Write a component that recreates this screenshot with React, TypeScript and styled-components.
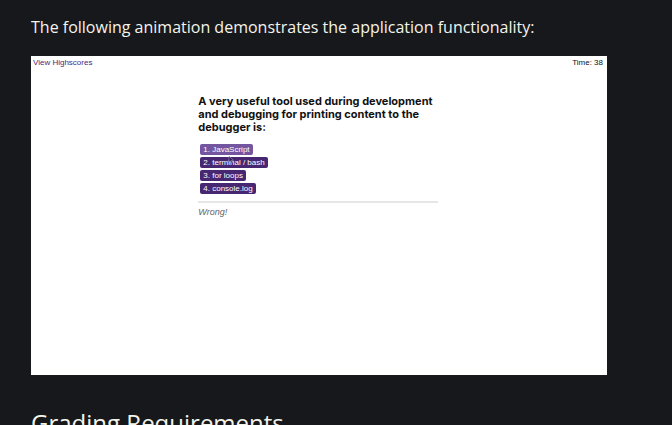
import React from "react";
import styled, { createGlobalStyle } from "styled-components";

const GlobalStyle = createGlobalStyle`
  body {
    margin: 0;
    background: #17181c;
    overflow: hidden;
  }
`;

const Page = styled.main`
  padding: 15px 65px 0 31px;
  color: #f3f4ea;
  font-family: "Open Sans", "Noto Sans", sans-serif;
`;

const Intro = styled.p`
  margin: 0 0 17px;
  font-size: 16px;
  line-height: 24px;
  white-space: nowrap;
`;

const Demo = styled.section`
  box-sizing: border-box;
  min-height: 319px;
  padding: 2px 4px 2px 2px;
  background: #fff;
  color: #111;
  font-family: "Liberation Sans", Arial, sans-serif;
`;

const TopBar = styled.header`
  display: flex;
  justify-content: space-between;
  font-size: 8px;
  line-height: 10px;
`;

const ScoresLink = styled.a`
  color: #4a2a78;
  text-decoration: none;
`;

const Quiz = styled.div`
  width: 42%;
  margin: 27px auto 0;
`;

const Question = styled.h2`
  margin: 0;
  font-family: Inter, "Liberation Sans", sans-serif;
  font-size: 11px;
  line-height: 13px;
`;

const Answers = styled.ol`
  display: flex;
  flex-direction: column;
  align-items: flex-start;
  gap: 2px;
  margin: 10px 0 7px;
  padding: 0 2px;
  list-style: none;
`;

const AnswerItem = styled.li`
  display: flex;
  position: relative;
`;

const Answer = styled.button<{ $hovered?: boolean }>`
  padding: 0 3px;
  border: 0;
  border-radius: 2px;
  background: ${(p) => (p.$hovered ? "#74559f" : "#472672")};
  color: #fff;
  font-family: inherit;
  font-size: 8px;
  line-height: 11px;
`;

const Pointer = styled.svg`
  position: absolute;
  left: 28px;
  top: 11px;
  width: 6px;
  height: 9px;
  z-index: 1;
  pointer-events: none;
`;

const Feedback = styled.p`
  margin: 0;
  padding-top: 3px;
  border-top: 2px solid #e6e6e6;
  color: #666;
  font-size: 9px;
  font-style: italic;
  line-height: 12px;
`;

const Heading = styled.h2`
  margin: 33px 0 0;
  font-size: 24px;
  font-weight: 400;
  line-height: 30px;
`;

const answers = ["JavaScript", "terminal / bash", "for loops", "console.log"];

export default function App() {
  return (
    <>
      <GlobalStyle />
      <Page>
        <Intro>The following animation demonstrates the application functionality:</Intro>
        <Demo>
          <TopBar>
            <ScoresLink href="#highscores">View Highscores</ScoresLink>
            <span>Time: 38</span>
          </TopBar>
          <Quiz>
            <Question>
              A very useful tool used during development and debugging for printing content to the
              debugger is:
            </Question>
            <Answers>
              {answers.map((answer, i) => (
                <AnswerItem key={answer}>
                  <Answer type="button" $hovered={i === 0}>
                    {i + 1}. {answer}
                  </Answer>
                  {i === 0 && (
                    <Pointer viewBox="0 0 6 9" aria-hidden="true">
                      <path
                        d="M1 1v6l1.4-1.2L3.5 8l1-.5-1-2.1h1.8z"
                        fill="#2b2140"
                        stroke="#b9a9d0"
                        strokeWidth=".5"
                      />
                    </Pointer>
                  )}
                </AnswerItem>
              ))}
            </Answers>
            <Feedback>Wrong!</Feedback>
          </Quiz>
        </Demo>
        <Heading>Grading Requirements</Heading>
      </Page>
    </>
  );
}
